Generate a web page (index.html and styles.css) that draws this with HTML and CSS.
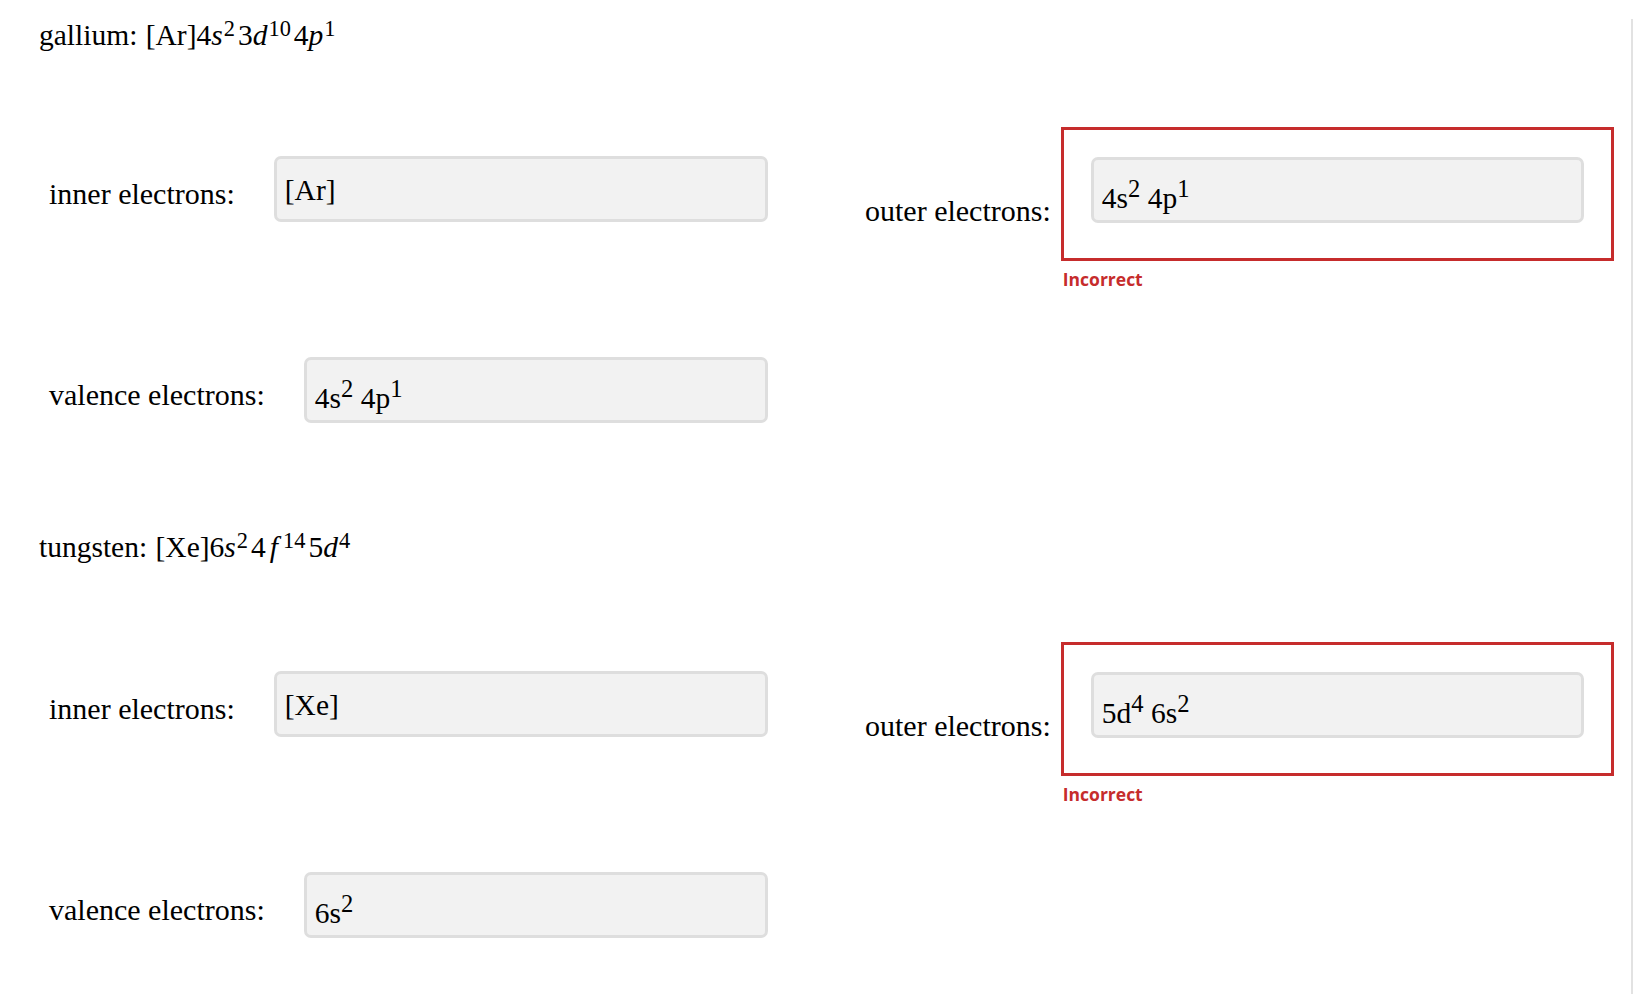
FILE: index.html
```html
<!DOCTYPE html>
<html lang="en">
<head>
<meta charset="utf-8">
<title>Electron configurations</title>
<link rel="stylesheet" href="styles.css">
</head>
<body>
<div class="page">
  <section class="section">
    <div class="formula">gallium: <span class="math">[Ar]4<i>s</i><sup>2</sup>3<i>d</i><sup>10</sup>4<i>p</i><sup>1</sup></span></div>
    <div class="row">
      <div class="field">
        <span class="label">inner electrons:</span>
        <div class="box">[Ar]</div>
      </div>
      <div class="outer">
        <span class="label outer-label">outer electrons:</span>
        <div class="answer">
          <div class="wrong">
            <div class="box">4s<sup>2</sup> 4p<sup>1</sup></div>
          </div>
          <div class="error">Incorrect</div>
        </div>
      </div>
    </div>
    <div class="row row-valence">
      <div class="field">
        <span class="label">valence electrons:</span>
        <div class="box">4s<sup>2</sup> 4p<sup>1</sup></div>
      </div>
    </div>
  </section>
  <section class="section section-next">
    <div class="formula">tungsten: <span class="math">[Xe]6<i>s</i><sup>2</sup>4<i class="f">f</i><sup>14</sup>5<i>d</i><sup>4</sup></span></div>
    <div class="row">
      <div class="field">
        <span class="label">inner electrons:</span>
        <div class="box">[Xe]</div>
      </div>
      <div class="outer">
        <span class="label outer-label">outer electrons:</span>
        <div class="answer">
          <div class="wrong">
            <div class="box">5d<sup>4</sup> 6s<sup>2</sup></div>
          </div>
          <div class="error">Incorrect</div>
        </div>
      </div>
    </div>
    <div class="row row-valence">
      <div class="field">
        <span class="label">valence electrons:</span>
        <div class="box">6s<sup>2</sup></div>
      </div>
    </div>
  </section>
</div>
</body>
</html>
```

FILE: styles.css
```css
html, body {
  margin: 0;
  padding: 0;
  background: #ffffff;
}

body {
  font-family: "Liberation Serif", "Times New Roman", serif;
  color: #000000;
}

.page {
  box-sizing: border-box;
  width: 1633px;
  min-height: 994px;
  border-right: 2px solid #e2e2e2;
  padding-left: 39px;
}

.formula {
  font-size: 29.5px;
  line-height: 33px;
  margin-top: 19px;
  white-space: nowrap;
}

.section-next .formula {
  margin-top: 108px;
}

.formula .math {
  margin-left: 1px;
}

.formula i {
  font-style: italic;
  margin-right: 1px;
}

.formula sup {
  font-size: 0.76em;
  line-height: 0;
  vertical-align: 9px;
  margin-right: 3px;
}

.formula i.f {
  margin: 0 5px 0 4px;
}

.row {
  display: flex;
  align-items: flex-start;
  margin-top: 75px;
  padding-left: 10px;
}

.section-next .row {
  margin-top: 78px;
}

.section .row-valence {
  margin-top: 39px;
}

.field {
  display: flex;
  align-items: flex-start;
  width: 719px;
  margin-top: 29px;
}

.label {
  font-size: 30px;
  line-height: 33px;
  margin-top: 21px;
  margin-right: 39px;
  white-space: nowrap;
}

.box {
  box-sizing: border-box;
  flex: 1;
  height: 66px;
  padding: 15px 8px 0 8px;
  background: #f2f2f2;
  border: 3px solid #dedede;
  border-radius: 7px;
  font-size: 29.5px;
  line-height: normal;
  white-space: nowrap;
}

.box sup {
  font-size: smaller;
  vertical-align: super;
}

.outer {
  display: flex;
  align-items: flex-start;
  margin-left: 97px;
}

.outer-label {
  margin-top: 67px;
  margin-right: 10px;
}

.answer {
  display: flex;
  flex-direction: column;
}

.wrong {
  box-sizing: border-box;
  width: 553px;
  height: 134px;
  border: 3px solid #c62c2c;
  padding: 27px 27px 0 27px;
}

.wrong .box {
  width: 100%;
}

.error {
  font-family: "Open Sans", "Liberation Sans", sans-serif;
  font-weight: 700;
  font-size: 17.5px;
  line-height: 20px;
  color: #c62c2c;
  margin-top: 8px;
  padding-left: 2px;
}
```
